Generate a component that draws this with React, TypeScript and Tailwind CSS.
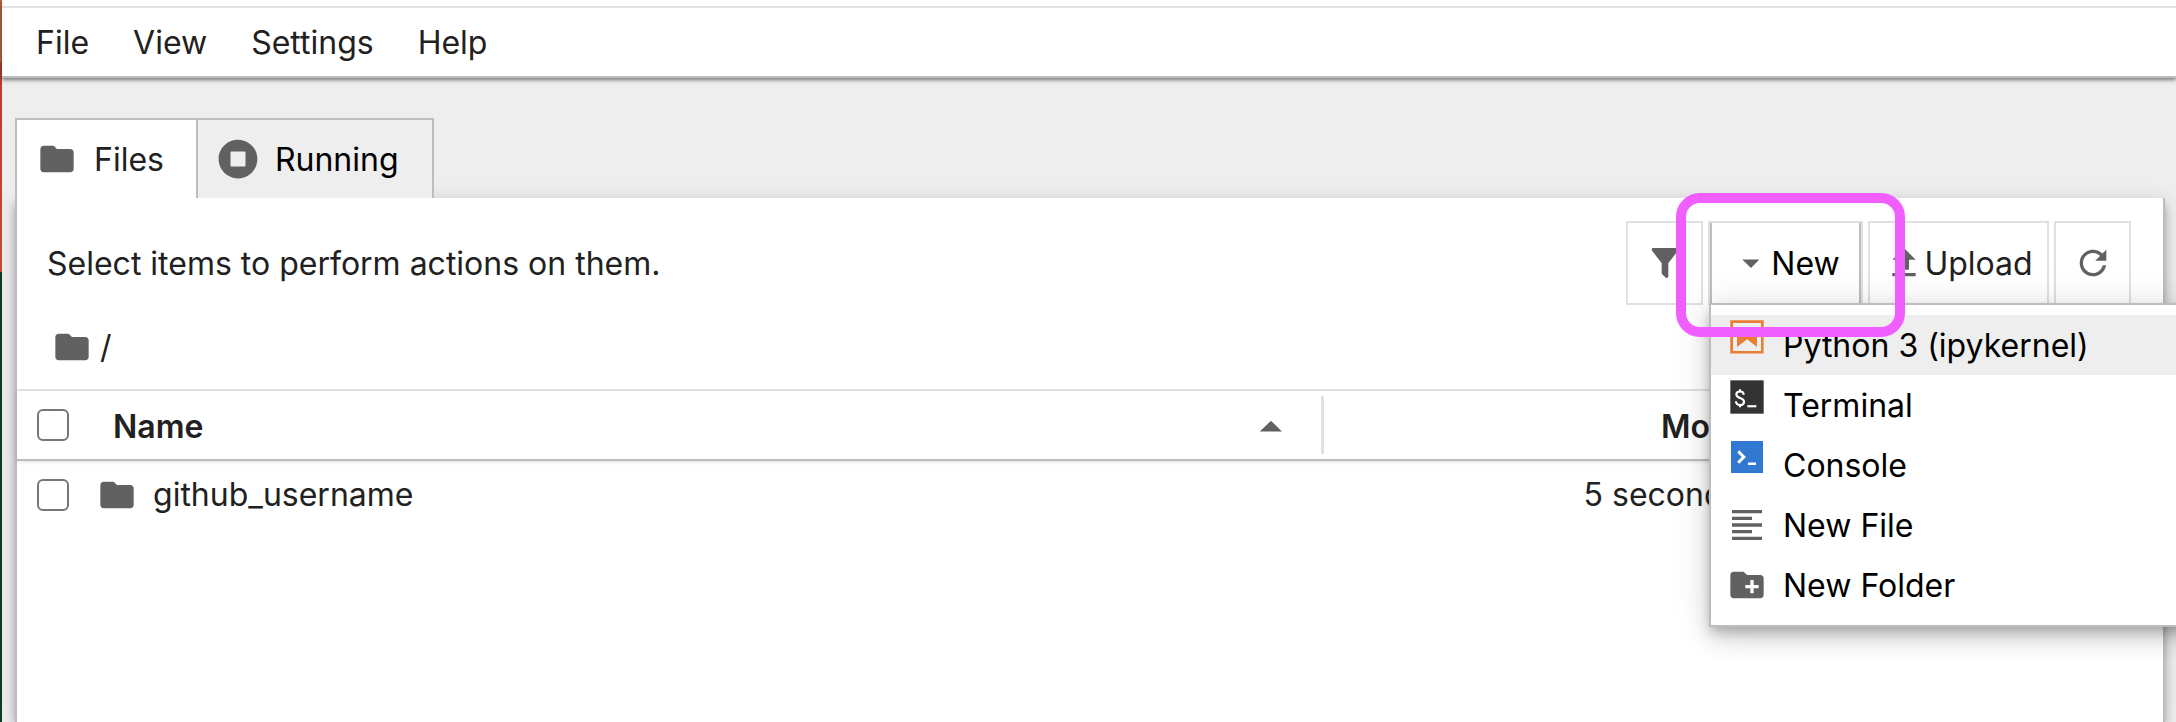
import type { ReactNode } from "react";

type IconProps = { className?: string };

function FolderIcon({ className = "" }: IconProps) {
  return (
    <svg viewBox="0 0 24 24" className={`size-10 shrink-0 fill-[#616161] ${className}`} aria-hidden="true">
      <path d="M10 4H4c-1.1 0-1.99.9-1.99 2L2 18c0 1.1.9 2 2 2h16c1.1 0 2-.9 2-2V8c0-1.1-.9-2-2-2h-8l-2-2z" />
    </svg>
  );
}

function RunningIcon() {
  return (
    <svg viewBox="0 0 512 512" className="size-10 shrink-0 fill-[#616161]" aria-hidden="true">
      <path d="M256 8C119 8 8 119 8 256s111 248 248 248 248-111 248-248S393 8 256 8zm96 328c0 8.8-7.2 16-16 16H176c-8.8 0-16-7.2-16-16V176c0-8.8 7.2-16 16-16h160c8.8 0 16 7.2 16 16v160z" />
    </svg>
  );
}

function FilterIcon() {
  return (
    <svg viewBox="0 0 24 24" className="size-10 shrink-0 fill-[#616161]" aria-hidden="true">
      <path d="M14,12V19.88C14.04,20.18 13.94,20.5 13.71,20.71C13.32,21.1 12.69,21.1 12.3,20.71L10.29,18.7C10.06,18.47 9.96,18.16 10,17.87V12H9.97L4.21,4.62C3.87,4.19 3.95,3.56 4.38,3.22C4.57,3.08 4.78,3 5,3H19C19.22,3 19.43,3.08 19.62,3.22C20.05,3.56 20.13,4.19 19.79,4.62L14.03,12H14Z" />
    </svg>
  );
}

function CaretDownIcon() {
  return (
    <svg viewBox="0 0 18 18" className="size-10 shrink-0 fill-[#616161]" aria-hidden="true">
      <path d="M5.2,7.5L9,11.2l3.8-3.8H5.2z" />
    </svg>
  );
}

function CaretUpIcon() {
  return (
    <svg viewBox="0 0 18 18" className="size-[52px] shrink-0 fill-[#616161]" aria-hidden="true">
      <path d="M5.2,10.5L9,6.8l3.8,3.8H5.2z" />
    </svg>
  );
}

function UploadIcon() {
  return (
    <svg viewBox="0 0 24 24" className="size-10 shrink-0 fill-[#616161]" aria-hidden="true">
      <path d="M9 16h6v-6h4l-7-7-7 7h4zm-4 2h14v2H5z" />
    </svg>
  );
}

function RefreshIcon() {
  return (
    <svg viewBox="0 0 18 18" className="size-10 shrink-0 fill-[#616161]" aria-hidden="true">
      <path d="M9 13.5c-2.49 0-4.5-2.01-4.5-4.5S6.51 4.5 9 4.5c1.24 0 2.36.52 3.17 1.33L10 8h5V3l-1.76 1.76C12.15 3.68 10.66 3 9 3 5.69 3 3.01 5.69 3.01 9S5.69 15 9 15c2.97 0 5.43-2.16 5.9-5h-1.52c-.46 2-2.24 3.5-4.38 3.5z" />
    </svg>
  );
}

function NotebookIcon() {
  return (
    <svg viewBox="0 0 22 22" className="mb-4 size-10 shrink-0 fill-[#e97e35]" aria-hidden="true">
      <path d="M18.7 3.3v15.4H3.3V3.3h15.4m1.5-1.5H1.8v18.3h18.3l.1-18.3z" />
      <path d="M16.5 16.5l-5.4-4.3-5.6 4.3v-11h11z" />
    </svg>
  );
}

function TerminalIcon() {
  return (
    <svg viewBox="0 0 24 24" className="mb-4 size-10 shrink-0" aria-hidden="true">
      <rect x="2" y="2" width="20" height="20" fill="#333333" />
      <path
        d="M10 10.7c0-1.2-.8-2-2.2-2s-2.2.8-2.2 1.8c0 2.6 4.6 1.6 4.6 4.3 0 1.2-.9 2-2.4 2s-2.4-.9-2.4-2.2M7.8 7.4v1.3M7.8 16.8v1.4"
        fill="none"
        stroke="#ffffff"
        strokeWidth="1.3"
      />
      <rect x="12.2" y="16.9" width="5.4" height="1.3" fill="#ffffff" />
    </svg>
  );
}

function ConsoleIcon() {
  return (
    <svg viewBox="0 0 200 200" className="mb-4 size-10 shrink-0" aria-hidden="true">
      <path fill="#3178d0" d="M20 19.8h160v159.9H20z" />
      <path
        fill="#ffffff"
        d="M105 127.3h40v12.8h-40zM51.1 77L74 99.9l-23.3 23.3 10.5 10.5 23.3-23.3L95 99.9 84.5 89.4 61.6 66.5z"
      />
    </svg>
  );
}

function TextFileIcon() {
  return (
    <svg viewBox="0 0 24 24" className="size-10 shrink-0 fill-[#616161]" aria-hidden="true">
      <path d="M15 15H3v2h12v-2zm0-8H3v2h12V7zM3 13h18v-2H3v2zm0 8h18v-2H3v2zM3 3v2h18V3H3z" />
    </svg>
  );
}

function NewFolderIcon() {
  return (
    <svg viewBox="0 0 24 24" className="size-10 shrink-0 fill-[#616161]" aria-hidden="true">
      <path d="M20 6h-8l-2-2H4c-1.11 0-1.99.89-1.99 2L2 18c0 1.11.89 2 2 2h16c1.11 0 2-.89 2-2V8c0-1.11-.89-2-2-2zm-1 8h-3v3h-2v-3h-3v-2h3V9h2v3h3v2z" />
    </svg>
  );
}

function Checkbox({ label }: { label: string }) {
  return (
    <input
      type="checkbox"
      aria-label={label}
      className="block size-8 appearance-none rounded-[6px] border-2 border-[#767676] bg-white"
    />
  );
}

const menuItems: { label: string; icon: ReactNode }[] = [
  { label: "Python 3 (ipykernel)", icon: <NotebookIcon /> },
  { label: "Terminal", icon: <TerminalIcon /> },
  { label: "Console", icon: <ConsoleIcon /> },
  { label: "New File", icon: <TextFileIcon /> },
  { label: "New Folder", icon: <NewFolderIcon /> },
];

function NewMenu() {
  return (
    <ul
      role="menu"
      className="absolute top-[82px] left-px z-10 w-[600px] border-2 border-[#bdbdbd] bg-white py-2.5 shadow-[0_6px_10px_-2px_rgba(0,0,0,0.2),0_12px_20px_0_rgba(0,0,0,0.14),0_2px_36px_0_rgba(0,0,0,0.12)]"
    >
      {menuItems.map((item, index) => (
        <li key={item.label} role="none">
          <button
            type="button"
            role="menuitem"
            className={`flex h-[60px] w-full items-center gap-4 pl-4 text-left text-black ${index === 0 ? "bg-[#eeeeee]" : ""}`}
          >
            {item.icon}
            <span className="pt-0.5">{item.label}</span>
          </button>
        </li>
      ))}
    </ul>
  );
}

function Toolbar() {
  const button = "flex h-[84px] items-center justify-center border-2 border-[#e0e0e0]";
  return (
    <div className="flex items-center justify-between pt-[23px] pr-8 pl-[30px]">
      <p className="pt-0.5">Select items to perform actions on them.</p>
      <div className="flex gap-[5px]">
        <button type="button" aria-label="Filter" className={`${button} w-[77px]`}>
          <FilterIcon />
        </button>
        <div className="relative">
          <button type="button" aria-haspopup="menu" aria-expanded="true" className={`${button} w-[155px] text-black`}>
            <span className="flex h-full w-full items-center justify-center border-x-2 border-[#bdbdbd]">
              <CaretDownIcon />
              <span className="pt-0.5">New</span>
            </span>
          </button>
          <NewMenu />
          <div className="pointer-events-none absolute -top-7 -left-8 z-20 h-36 w-[229px] rounded-3xl border-10 border-[#f05eff]" />
        </div>
        <button type="button" className={`${button} w-[181px]`}>
          <UploadIcon />
          <span className="pt-0.5">Upload</span>
        </button>
        <button type="button" aria-label="Refresh" className={`${button} w-[77px]`}>
          <RefreshIcon />
        </button>
      </div>
    </div>
  );
}

function FileTable() {
  return (
    <table className="w-full table-fixed border-collapse text-left">
      <thead className="border-t-2 border-b-2 border-t-[#e0e0e0] border-b-[#bdbdbd] shadow-[0_2px_4px_rgba(0,0,0,0.12)]">
        <tr className="h-[70px]">
          <th className="p-0 font-semibold">
            <div className="flex h-[58px] items-center border-r-3 border-[#e0e0e0] pr-6 pl-5">
              <Checkbox label="Select all files" />
              <span className="ml-11 flex-1 pt-1">Name</span>
              <span className="pt-1">
                <CaretUpIcon />
              </span>
            </div>
          </th>
          <th className="w-[474px] p-0 pt-1 text-right font-semibold">Modified</th>
          <td className="w-[17%] p-0" />
        </tr>
      </thead>
      <tbody>
        <tr className="h-[68px]">
          <td className="p-0">
            <div className="flex items-center pl-5">
              <Checkbox label="Select github_username" />
              <FolderIcon className="ml-7" />
              <span className="ml-4">github_username</span>
            </div>
          </td>
          <td className="p-0 text-right whitespace-nowrap">
            <span className="-mr-2">5 seconds ago</span>
          </td>
          <td className="p-0" />
        </tr>
      </tbody>
    </table>
  );
}

export default function App() {
  return (
    <div className="flex min-h-screen overflow-hidden bg-[#eeeeee] font-['Inter','Liberation_Sans',sans-serif] text-[32px] leading-10 text-[#212121]">
      <div className="flex w-0.5 shrink-0 flex-col">
        <div className="h-[62px] bg-[#c0643c]" />
        <div className="h-[210px] bg-linear-to-b from-[#b33c33] to-[#c0502f]" />
        <div className="flex-1 bg-[#0f3d1f]" />
      </div>
      <div className="flex min-w-0 flex-1 flex-col">
        <header className="z-10 bg-white pt-1.5 shadow-[0_2px_4px_rgba(0,0,0,0.5)]">
          <nav className="flex h-[72px] items-center gap-11 border-t-2 border-b-2 border-t-[#e0e0e0] border-b-[#bdbdbd] pt-0.5 pl-[34px]">
            <button type="button">File</button>
            <button type="button">View</button>
            <button type="button">Settings</button>
            <button type="button">Help</button>
          </nav>
        </header>
        <main className="flex flex-1 flex-col pt-10 pr-[11px] pl-[13px]">
          <div role="tablist" className="z-10 flex h-20">
            <button
              type="button"
              role="tab"
              aria-selected="true"
              className="flex items-center gap-[17px] border-t-2 border-l-2 border-[#bdbdbd] bg-white pr-8 pl-5"
            >
              <FolderIcon />
              <span className="pt-0.5">Files</span>
            </button>
            <button
              type="button"
              role="tab"
              aria-selected="false"
              className="flex items-center gap-[17px] border-t-2 border-r-2 border-l-2 border-[#bdbdbd] bg-[#eeeeee] pr-[33px] pl-5 text-black"
            >
              <RunningIcon />
              <span className="pt-0.5">Running</span>
            </button>
          </div>
          <section className="flex-1 border-x-2 border-[#bdbdbd] bg-white shadow-[0_4px_8px_-2px_rgba(0,0,0,0.2),0_8px_10px_0_rgba(0,0,0,0.14),0_2px_20px_0_rgba(0,0,0,0.12)]">
            <Toolbar />
            <div className="flex h-[84px] items-center gap-2 pl-[35px]">
              <FolderIcon />
              <span>/</span>
            </div>
            <FileTable />
          </section>
        </main>
      </div>
    </div>
  );
}
